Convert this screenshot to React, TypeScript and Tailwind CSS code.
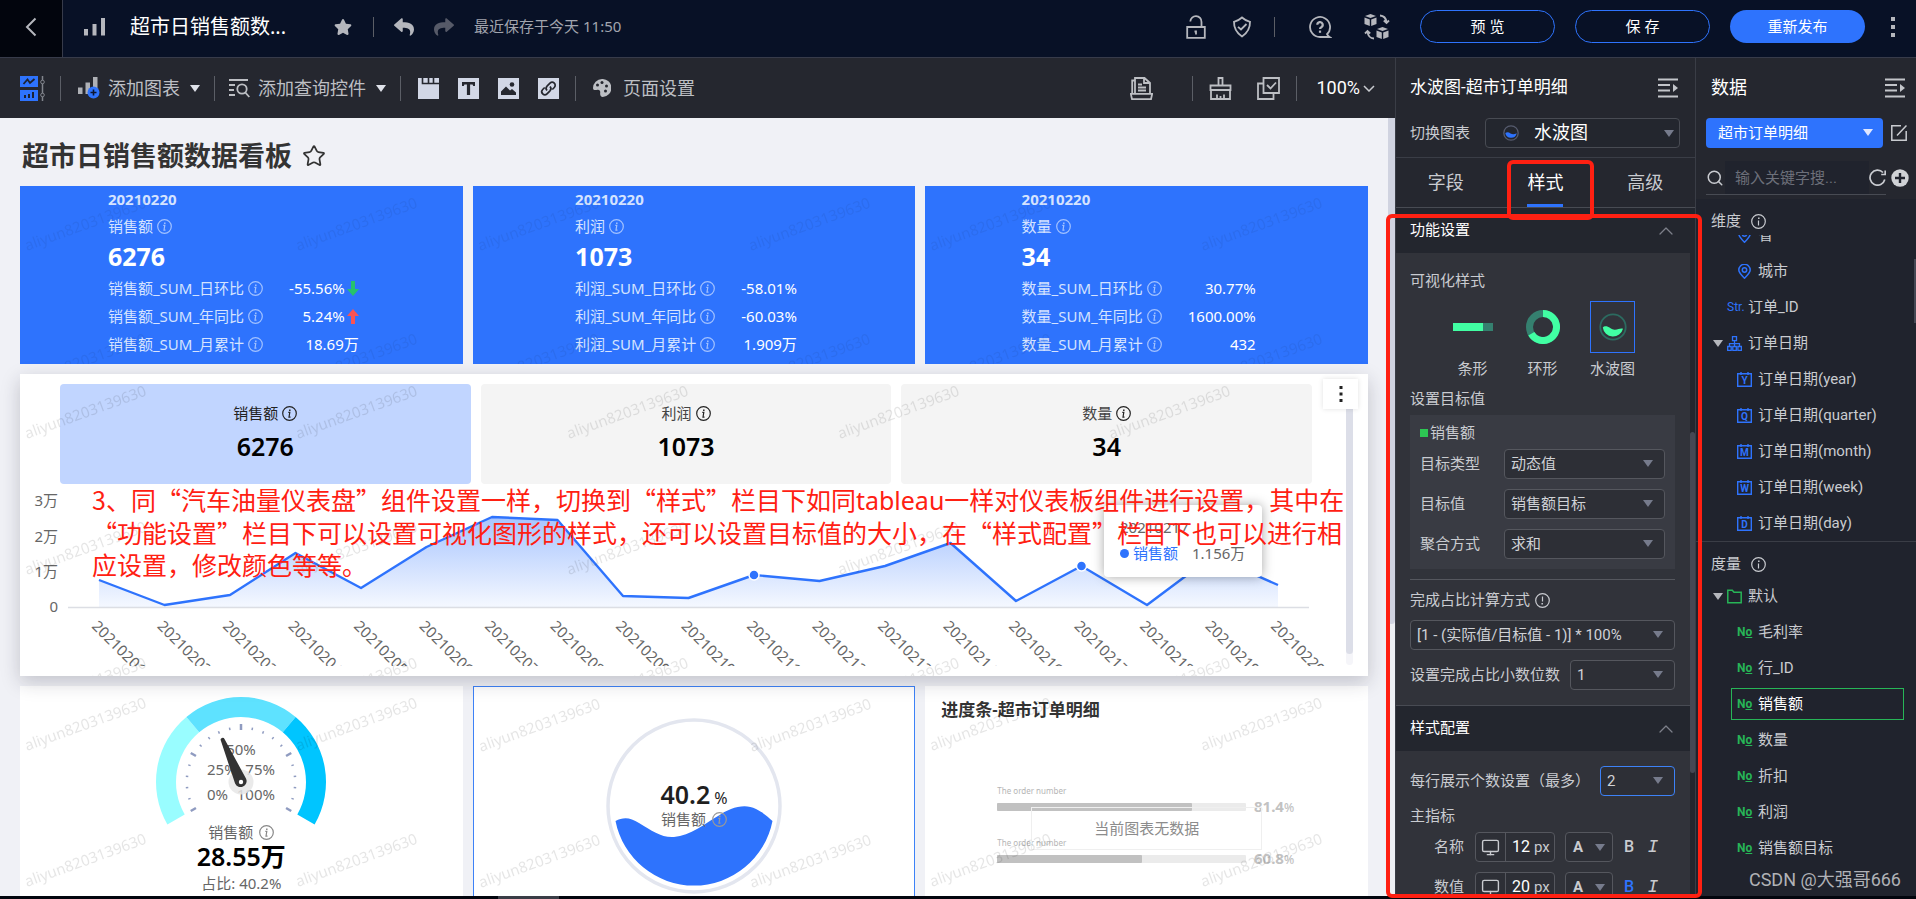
import { useId, type ReactNode } from "react";
import { Search, ChevronUp, Star, Monitor } from "lucide-react";
import { FaStar, FaReply, FaShare } from "react-icons/fa";
import { clsx } from "clsx";

interface Kpi {
  name: string;
  total: string;
  rows: { label: string; value: string; trend?: "up" | "down" }[];
}

const KPIS: Kpi[] = [
  {
    name: "销售额",
    total: "6276",
    rows: [
      { label: "销售额_SUM_日环比", value: "-55.56%", trend: "down" },
      { label: "销售额_SUM_年同比", value: "5.24%", trend: "up" },
      { label: "销售额_SUM_月累计", value: "18.69万" },
    ],
  },
  {
    name: "利润",
    total: "1073",
    rows: [
      { label: "利润_SUM_日环比", value: "-58.01%" },
      { label: "利润_SUM_年同比", value: "-60.03%" },
      { label: "利润_SUM_月累计", value: "1.909万" },
    ],
  },
  {
    name: "数量",
    total: "34",
    rows: [
      { label: "数量_SUM_日环比", value: "30.77%" },
      { label: "数量_SUM_年同比", value: "1600.00%" },
      { label: "数量_SUM_月累计", value: "432" },
    ],
  },
];

const SALES = [96, 121, 111, 69, 104, 63, 33, 36, 112, 114, 91, 97, 82, 59, 117, 82, 121, 72, 101];
const DAYS = ["01", "02", "03", "04", "05", "06", "07", "08", "09", "10", "11", "12", "13", "14", "16", "17", "18", "19", "20"];
const Y_TICKS = [
  { label: "3万", y: 17 },
  { label: "2万", y: 53 },
  { label: "1万", y: 88 },
  { label: "0", y: 123 },
];

interface Field {
  kind: "pin" | "str" | "tree" | "folder" | "number" | "date";
  label: string;
  letter?: string;
  active?: boolean;
}

const DIMENSIONS: Field[] = [
  { kind: "pin", label: "省" },
  { kind: "pin", label: "城市" },
  { kind: "str", label: "订单_ID" },
  { kind: "tree", label: "订单日期" },
  { kind: "date", letter: "Y", label: "订单日期(year)" },
  { kind: "date", letter: "Q", label: "订单日期(quarter)" },
  { kind: "date", letter: "M", label: "订单日期(month)" },
  { kind: "date", letter: "W", label: "订单日期(week)" },
  { kind: "date", letter: "D", label: "订单日期(day)" },
];

const MEASURES: Field[] = [
  { kind: "folder", label: "默认" },
  { kind: "number", label: "毛利率" },
  { kind: "number", label: "行_ID" },
  { kind: "number", label: "销售额", active: true },
  { kind: "number", label: "数量" },
  { kind: "number", label: "折扣" },
  { kind: "number", label: "利润" },
  { kind: "number", label: "销售额目标" },
];

function Watermark({ faint }: { faint?: boolean }) {
  const id = useId();
  return (
    <svg className="pointer-events-none absolute inset-0 h-full w-full" aria-hidden="true">
      <defs>
        <pattern id={id} width="271" height="136" patternUnits="userSpaceOnUse">
          <text x="7" y="65" transform="rotate(-20 7 65)" fontSize="15" fill="#000" fillOpacity={faint ? 0.06 : 0.1}>
            aliyun8203139630
          </text>
        </pattern>
      </defs>
      <rect width="100%" height="100%" fill={`url(#${id})`} />
    </svg>
  );
}

// circled "i" with a serif foot; `plain` drops the serifs
function InfoIcon({ className, plain }: { className?: string; plain?: boolean }) {
  return (
    <svg viewBox="0 0 15 15" className={clsx("h-[15px] w-[15px] shrink-0", className)} fill="none" stroke="currentColor" strokeWidth="1.200" aria-hidden="true">
      <circle cx="7.500" cy="7.500" r="6.800" />
      <path d={plain ? "M7.500 6.500v5" : "M6.300 6.400h1.500L7 11.200h1.500"} />
      <path d="M7.800 3.500v1.600" strokeWidth="1.500" />
    </svg>
  );
}

function Caret({ className }: { className?: string }) {
  return (
    <svg viewBox="0 0 10 7" className={clsx("h-[7px] w-[10px] shrink-0 fill-current", className)} aria-hidden="true">
      <path d="M0 0h10L5 7z" />
    </svg>
  );
}

function Divider({ className }: { className?: string }) {
  return <span className={clsx("w-px shrink-0 bg-[#5b5e66]", className)} />;
}

function CollapseIcon() {
  return (
    <svg viewBox="0 0 20 20" className="h-5 w-5" fill="none" stroke="#c3c5ca" strokeWidth="2">
      <path d="M0 1.500h20M0 7h12M0 12.500h12M0 18.500h20" />
      <path d="M15 6l5 4-5 4z" fill="#c3c5ca" stroke="none" />
    </svg>
  );
}

function TopBar() {
  return (
    <header className="flex h-[58px] shrink-0 border-b border-[#373b4a] bg-[#081126] text-[#b5b7bd]">
      <button aria-label="返回" className="grid h-full w-[63px] shrink-0 place-items-center border-r border-[#373b4a] bg-[#02050d] pb-1">
        <svg viewBox="0 0 12 20" className="h-5 w-3" fill="none" stroke="currentColor" strokeWidth="2">
          <path d="M10.500 1.500L2 10l8.500 8.500" />
        </svg>
      </button>
      <div className="flex flex-1 items-center pb-1">
        <svg viewBox="0 0 22 18" className="ml-[21px] h-[18px] w-[22px] shrink-0 fill-current">
          <path d="M0 11h4v6.500H0zM8.500 6h4v11.500h-4zM17 0h4v17.500h-4z" />
        </svg>
        <h1 className="ml-6 text-xl text-white">超市日销售额数...</h1>
        <button aria-label="收藏" className="ml-12"><FaStar className="h-[18px] w-[18px]" /></button>
        <Divider className="ml-[21px] h-5" />
        <button aria-label="撤销" className="ml-5"><FaReply className="h-5 w-5" /></button>
        <button aria-label="重做" className="ml-5 text-[#565a68]"><FaShare className="h-5 w-5" /></button>
        <span className="ml-5 text-[15px] text-[#a2a5ae]">最近保存于今天 11:50</span>

        <div className="ml-auto flex items-center pr-[19px]">
          <button aria-label="解锁">
            <svg viewBox="0 0 20 24" className="h-6 w-5" fill="none" stroke="currentColor" strokeWidth="1.800">
              <path d="M1.200 12h17.600v10.800H1.200zM15.500 12V7a5.500 5.500 0 0 0-11.200-.5M10 15.500v4M8.500 16.500H10" />
            </svg>
          </button>
          <button aria-label="权限" className="ml-[26px]">
            <svg viewBox="0 0 20 22" className="h-[22px] w-5" fill="none" stroke="currentColor" strokeWidth="1.800">
              <path d="M10 1.500c2.200 2 4.800 3.500 8 4.300.2 6.500-2.800 11.200-8 14.700C4.800 17 1.800 12.300 2 5.800 5.200 5 7.800 3.500 10 1.500z" />
              <path d="M6 10.800l3 2.700 5.500-5.500" />
            </svg>
          </button>
          <Divider className="ml-[22px] h-5" />
          <button aria-label="帮助" className="ml-[33px]">
            <svg viewBox="0 0 24 24" className="h-6 w-6" fill="none" stroke="currentColor" strokeWidth="1.800">
              <path d="M19 19.200a10 10 0 1 0-7 2.800h9.500c-1.300-.8-2-1.700-2.500-2.800z" />
              <path d="M9.300 9.800a2.700 2.700 0 1 1 4 2.400c-.9.500-1.300.9-1.300 1.900" strokeWidth="2.200" />
              <path d="M12 15.600v2.200" strokeWidth="2.200" />
            </svg>
          </button>
          <button aria-label="资源切换" className="ml-8">
            <svg viewBox="0 0 26 26" className="h-[26px] w-[26px]" fill="currentColor">
              <path d="M6.500 0l5.500 2-5.500 2L1 2zM.5 3.500l5.300 2V12L.5 10zM12.500 3.500l-5.300 2V12l5.300-2z" />
              <path d="M18.500 13l5.500 2-5.500 2-5.500-2zM12.500 16.500l5.300 2V25l-5.300-2zM24.500 16.500l-5.300 2V25l5.300-2z" />
              <path d="M16 1.500c3.500.3 6 2.800 6.500 6.500M19.800 6.500l2.700 2.500L25 6.500M10 24.500C6.500 24.300 4 21.800 3.500 18M1 19.500L3.500 17l2.700 2.500" fill="none" stroke="currentColor" strokeWidth="1.800" />
            </svg>
          </button>
          <button className="ml-[30px] h-[33px] w-[135px] rounded-full border border-[#2e73fd] text-[15px] text-white">预 览</button>
          <button className="ml-5 h-[33px] w-[135px] rounded-full border border-[#2e73fd] text-[15px] text-white">保 存</button>
          <button className="ml-5 h-[33px] w-[135px] rounded-full bg-[#2e73fd] text-[15px] text-white">重新发布</button>
          <button aria-label="更多" className="ml-6">
            <svg viewBox="0 0 8 20" className="h-5 w-2 fill-current">
              <path d="M2 0h4v4H2zM2 8h4v4H2zM2 16h4v4H2z" />
            </svg>
          </button>
        </div>
      </div>
    </header>
  );
}

function SquareIcon({ label, children }: { label: string; children: ReactNode }) {
  return (
    <button aria-label={label}>
      <svg viewBox="0 0 21 21" className="h-[21px] w-[21px]">
        <path d="M0 0h21v21H0z" fill="#d2d7e6" />
        {children}
      </svg>
    </button>
  );
}

function Toolbar() {
  return (
    <div className="flex h-[60px] shrink-0 items-center bg-[#25272f] pl-5 text-lg text-[#bdbfc4]">
      <button aria-label="布局">
        <svg viewBox="0 0 25 25" className="h-[25px] w-[25px]" fill="none">
          <path d="M0 0h18v11H0zM0 14h18v11H0z" fill="#2e73fd" />
          <path d="M3.500 8l4-4.500L10 7l4.500-4" stroke="#1d2230" strokeWidth="1.800" />
          <path d="M5 22v-3M9 22v-4M13 22v-6" stroke="#1d2230" strokeWidth="2" />
          <path d="M22.500 0v25" stroke="#82858d" strokeWidth="1.500" />
          <circle cx="22.500" cy="6" r="1.800" fill="#25272f" stroke="#82858d" />
          <circle cx="22.500" cy="19" r="1.800" fill="#25272f" stroke="#82858d" />
        </svg>
      </button>
      <Divider className="ml-[15px] h-[25px]" />
      <button className="ml-4 flex items-center">
        <svg viewBox="0 0 23 22" className="h-[22px] w-[23px]">
          <path d="M1 10.500h4.500V17H1zM8.500 5.500H13V17H8.500zM16 0h4.500v17H16z" fill="#aeb0b5" />
          <circle cx="16.500" cy="15.500" r="6" fill="#2e73fd" />
          <path d="M16.500 12.500v6M13.500 15.500h6" stroke="#0d1630" strokeWidth="1.600" />
        </svg>
        <span className="ml-2">添加图表</span>
        <Caret className="ml-2.5 h-[6px] w-2 text-[#dfe2ea]" />
      </button>
      <Divider className="ml-[14px] h-[25px]" />
      <button className="ml-[14px] flex items-center">
        <svg viewBox="0 0 21 20" className="h-5 w-[21px]" fill="none" stroke="currentColor" strokeWidth="1.800">
          <path d="M0 2h19M0 7h6M0 12h5M0 17h6" />
          <circle cx="13" cy="11" r="4.700" />
          <path d="M16.300 14.500l4 4.500" />
        </svg>
        <span className="ml-2">添加查询控件</span>
        <Caret className="ml-2.5 h-[6px] w-2 text-[#dfe2ea]" />
      </button>
      <Divider className="ml-[14px] h-[25px]" />
      <div className="ml-[17px] flex gap-[19px]">
        <SquareIcon label="标签页">
          <path d="M4.500 0v5.500h16.500M10.500 0v5.500M15.500 0v5.500" stroke="#25272f" strokeWidth="1.600" fill="none" />
        </SquareIcon>
        <SquareIcon label="文本">
          <path d="M4 4h13v4h-1.800l-.6-1.500h-2.500V17h-3.200V6.500H6.400L5.800 8H4z" fill="#25272f" />
        </SquareIcon>
        <SquareIcon label="图片">
          <path d="M3 17v-3.500l5-5 4 4 2-1.500 4 3.500V17z" fill="#25272f" />
          <circle cx="14" cy="6.500" r="2.300" fill="#25272f" />
        </SquareIcon>
        <SquareIcon label="链接">
          <path d="M9 12.500a3.200 3.200 0 0 1 0-4.300l3-3a3 3 0 0 1 4.300 4.300l-2 2M12 8.500a3.200 3.200 0 0 1 0 4.300l-3 3a3 3 0 0 1-4.300-4.300l2-2" stroke="#25272f" strokeWidth="1.700" fill="none" />
        </SquareIcon>
      </div>
      <Divider className="ml-4 h-[25px]" />
      <button className="ml-[17px] flex items-center gap-3">
        <svg viewBox="0 0 18 18" className="h-[18px] w-[18px]">
          <path d="M9 0a9 9 0 0 0-9 9c0 2.500 2.500 2.200 4.500 1.800 2-.3 3 1 2.700 3-.3 2.300.5 4.200 2.600 4.200A9 9 0 0 0 9 0z" fill="#bdbfc4" />
          <circle cx="4.500" cy="6" r="1.500" fill="#25272f" />
          <circle cx="9" cy="3.600" r="1.500" fill="#25272f" />
          <circle cx="13.500" cy="7" r="1.500" fill="#25272f" />
          <circle cx="12.500" cy="12" r="1.500" fill="#25272f" />
        </svg>
        页面设置
      </button>

      <div className="ml-auto flex items-center pr-5">
        <button aria-label="打印">
          <svg viewBox="0 0 23 23" className="h-[23px] w-[23px]" fill="none" stroke="currentColor" strokeWidth="1.800">
            <path d="M5 16V1h9.500L20 6v10M2.200 16.500V3.500H5M14 1v5h6M.8 16.800h21.400L21 22.200H2zM8 7.500h4M8 10.500h8M8 13.500h8" />
          </svg>
        </button>
        <Divider className="ml-[39px] h-[25px]" />
        <button aria-label="格式刷" className="ml-4">
          <svg viewBox="0 0 23 23" className="h-[23px] w-[23px]" fill="none" stroke="currentColor" strokeWidth="1.800">
            <path d="M9.500 8.500V1h4v7.500M1.500 8.500h20v4.500h-20zM2 13v9h19v-9M8 22v-4.500M11.500 22v-3M15 22v-4.500" />
          </svg>
        </button>
        <button aria-label="批量选择" className="ml-[25px]">
          <svg viewBox="0 0 23 23" className="h-[23px] w-[23px]" fill="none" stroke="currentColor" strokeWidth="1.800">
            <path d="M6.500 1H22v15H6.500zM6.500 6.500H1V22h15.500v-6M10 8l3.500 3.500 5.500-6" />
          </svg>
        </button>
        <Divider className="ml-4 h-[25px]" />
        <button className="ml-[19px] flex items-center gap-[3px] font-['Roboto',sans-serif] text-white">
          100%
          <svg viewBox="0 0 12 7" className="h-[7px] w-3" fill="none" stroke="#c9cbd0" strokeWidth="1.500">
            <path d="M1 1l5 5 5-5" />
          </svg>
        </button>
      </div>
    </div>
  );
}

function TrendArrow({ trend }: { trend: "up" | "down" }) {
  return (
    <svg viewBox="0 0 12 15" className={clsx("ml-0.5 h-[15px] w-3", trend === "up" ? "rotate-180 fill-[#f95353]" : "fill-[#27c26c]")}>
      <path d="M4 0h4v8h4l-6 7-6-7h4z" />
    </svg>
  );
}

function KpiCard({ kpi }: { kpi: Kpi }) {
  return (
    <section className="relative flex h-[178px] justify-center bg-[#2e73fd] pr-4 text-[15px] text-[#d5e3ff]">
      <div>
        <p className="h-[26px] leading-[26px] font-bold">20210220</p>
        <p className="flex h-7 items-center gap-1">
          {kpi.name}
          <InfoIcon className="text-[#a3c2ff]" />
        </p>
        <p className="h-[34px] text-[25px] leading-8 font-bold text-white">{kpi.total}</p>
        <table>
          <tbody>
            {kpi.rows.map((row) => (
              <tr key={row.label} className="h-7">
                <th className="p-0 font-normal">
                  <span className="flex items-center gap-1">
                    {row.label}
                    <InfoIcon className="text-[#a3c2ff]" />
                  </span>
                </th>
                <td className="p-0 pl-[26px] text-white">
                  <span className="flex items-center justify-end">
                    {row.value}
                    {row.trend && <TrendArrow trend={row.trend} />}
                  </span>
                </td>
              </tr>
            ))}
          </tbody>
        </table>
      </div>
      <Watermark faint />
    </section>
  );
}

function TrendChart() {
  const pts = SALES.map((y, i) => [79 + i * 65.5, y]);
  const line = pts.map((p) => p.join(",")).join(" L");
  return (
    <svg viewBox="0 0 1348 192" className="block h-auto w-full" fontSize="15" fill="#666">
      <defs>
        <linearGradient id="area" x1="0" y1="0" x2="0" y2="1">
          <stop offset="0" stopColor="#2e73fd" stopOpacity="0.42" />
          <stop offset="1" stopColor="#2e73fd" stopOpacity="0.05" />
        </linearGradient>
        <clipPath id="labels">
          <path d="M0 124h1348v58H0z" />
        </clipPath>
      </defs>
      {Y_TICKS.map((t) => (
        <text key={t.label} x="38" y={t.y + 5} textAnchor="end">{t.label}</text>
      ))}
      <path d="M48 123.500h1241" stroke="#dcdee4" strokeWidth="1.500" />
      <path d={`M${line} L1258,123 L79,123 Z`} fill="url(#area)" />
      <path d={`M${line}`} fill="none" stroke="#2e73fd" strokeWidth="2.400" strokeLinejoin="round" />
      {[10, 15].map((i) => (
        <circle key={i} cx={pts[i][0]} cy={pts[i][1]} r="5" fill="#2e73fd" stroke="#fff" strokeWidth="1.500" />
      ))}
      <g clipPath="url(#labels)">
        {DAYS.map((d, i) => (
          <text key={d} transform={`translate(${71 + i * 65.5} 143) rotate(45)`}>{`202102${d}`}</text>
        ))}
      </g>
    </svg>
  );
}

function TrendCard() {
  return (
    <section className="relative z-10 bg-white pt-2.5 shadow-[0_6px_18px_rgba(30,30,50,0.22)]">
      <div className="mr-14 ml-10 grid grid-cols-3 gap-2.5">
        {KPIS.map((kpi, i) => (
          <button
            key={kpi.name}
            className={clsx("flex h-[100px] flex-col items-center rounded-sm pt-4 text-[15px]", i === 0 ? "bg-[#c1d5ff] text-[#222]" : "bg-[#f4f4f4] text-[#444]")}
          >
            <span className="flex h-[26px] items-center gap-1">
              {kpi.name}
              <InfoIcon className="text-[#222]" />
            </span>
            <span className="mt-1 text-[25px] leading-8 font-semibold text-black">{kpi.total}</span>
          </button>
        ))}
      </div>
      <TrendChart />
      <Watermark />
      <div className="absolute top-3 right-[15px] bottom-[11px] w-[7px] rounded bg-[#f5f5f9]">
        <div className="h-[96%] rounded bg-[#dcdee8]" />
      </div>
      <button aria-label="图表菜单" className="absolute top-[5px] right-2.5 grid h-[30px] w-[35px] place-items-center bg-white shadow-[0_0_5px_rgba(0,0,0,0.12)]">
        <svg viewBox="0 0 4 16" className="h-4 w-1 fill-[#222]">
          <path d="M.5 0h3v3h-3zM.5 6.500h3v3h-3zM.5 13h3v3h-3z" />
        </svg>
      </button>
      <div className="absolute right-[106px] bottom-[99px] w-[158px] rounded-sm bg-white px-4 py-2.5 text-[15px] leading-7 text-[#666] shadow-[0_0_12px_rgba(0,0,0,0.35)]">
        <p className="leading-6">20210217</p>
        <p className="flex items-center">
          <span className="mr-1 h-[9px] w-[9px] rounded-full bg-[#2e73fd]" />
          <span className="text-[#2e73fd]">销售额</span>
          <span className="ml-3.5">1.156万</span>
        </p>
      </div>
      <p className="pointer-events-none absolute top-[109px] left-[72px] text-[25px] leading-8 whitespace-nowrap text-[#ff2012] font-['Noto_Sans_CJK_SC',sans-serif]">
        3、同“汽车油量仪表盘”组件设置一样，切换到“样式”栏目下如同<span className="font-['Noto_Sans',sans-serif]">tableau</span>一样对仪表板组件进行设置，其中在
        <br />
        “功能设置”栏目下可以设置可视化图形的样式，还可以设置目标值的大小，在“样式配置”栏目下也可以进行相
        <br />
        应设置，修改颜色等等。
      </p>
    </section>
  );
}

// point on a circle centred at (88, 88), angle in degrees counter-clockwise
const polar = (r: number, deg: number) => {
  const a = (deg * Math.PI) / 180;
  return `${88 + r * Math.cos(a)} ${88 - r * Math.sin(a)}`;
};

const ringSegment = (from: number, to: number) =>
  `M${polar(85, from)}A85 85 0 0 1 ${polar(85, to)}L${polar(65, to)}A65 65 0 0 0 ${polar(65, from)}Z`;

function GaugeCard() {
  return (
    <section className="relative flex flex-col items-center bg-white pt-2 text-[15px] text-[#666]">
      <svg viewBox="0 0 176 126" className="h-[126px] w-44 overflow-visible" fontSize="15" fill="#666">
        <path d={ringSegment(210, 130)} fill="#99fdff" />
        <path d={ringSegment(130, 50)} fill="#5ee2ff" />
        <path d={ringSegment(50, -30)} fill="#00c5ff" />
        {Array.from({ length: 21 }, (_, i) => {
          const deg = 210 - i * 12;
          const major = i % 5 === 0;
          return (
            <path
              key={i}
              d={`M${polar(major ? 58 : 55.5, deg)}L${polar(major ? 52 : 53, deg)}`}
              stroke="#8f9bc0"
              strokeWidth={major ? 2.5 : 1.5}
            />
          );
        })}
        <text x="88" y="61" textAnchor="middle">50%</text>
        <text x="54" y="81">25%</text>
        <text x="122" y="81" textAnchor="end">75%</text>
        <text x="54" y="106">0%</text>
        <text x="122" y="106" textAnchor="end">100%</text>
        <circle cx="88" cy="88" r="12.500" fill="#e6e6e6" fillOpacity="0.85" />
        <g transform="rotate(-23.500 88 88)">
          <path d="M86 42a2 2 0 0 1 4 0l4 45a6 6 0 1 1-12 0z" fill="#333" />
        </g>
        <circle cx="88" cy="88" r="2.200" fill="#fff" />
      </svg>
      <p className="flex h-6 items-center gap-1.5">
        销售额
        <InfoIcon className="text-[#888]" />
      </p>
      <p className="h-[25px] text-[25px] leading-[25px] font-semibold text-black">28.55万</p>
      <p className="h-7 leading-7">占比: 40.2%</p>
      <Watermark />
    </section>
  );
}

function LiquidCard() {
  return (
    <section className="relative flex justify-center border border-[#3d82f7] bg-white pt-[31px]">
      <div className="relative h-[176px] w-[176px]">
        <svg viewBox="0 0 176 176" className="h-full w-full">
          <circle cx="88" cy="88" r="86" fill="none" stroke="#e3e6ef" strokeWidth="3.500" />
          <path d="M9.500 103C17 99 24 99 33 105C46 113 56 120 68 119C84 118 100 105 112 98C124 90 138 85 150 91C158 95 162 99 166.500 103A80 80 0 0 1 9.500 103Z" fill="#2e73fd" />
        </svg>
        <div className="absolute inset-0 flex flex-col items-center justify-center text-[15px] text-[#666]">
          <p className="flex h-[26px] items-baseline gap-1 leading-[26px] text-[#1f1f1f]">
            <span className="text-[25px] font-semibold">40.2</span>
            <span className="text-base">%</span>
          </p>
          <p className="flex h-6 items-center gap-1.5">
            销售额
            <InfoIcon className="text-[#999]" />
          </p>
        </div>
      </div>
      <Watermark />
    </section>
  );
}

function GhostBar({ value }: { value: number }) {
  return (
    <div className="text-[#c2c2c2]">
      <p className="text-[8px] leading-4 text-[#b5b5b5]">The order number</p>
      <div className="flex h-4 items-center">
        <div className="h-2 flex-1 rounded-[1px] bg-[#ebebeb]">
          <div className="h-2 rounded-[1px] bg-[#c1c1c1]" style={{ width: `${value * 0.96}%` }} />
        </div>
        <span className="ml-2 w-[42px] text-[15px] leading-4 font-bold">
          {value}
          <span className="text-xs font-medium">%</span>
        </span>
      </div>
    </div>
  );
}

function ProgressCard() {
  return (
    <section className="relative bg-white pt-3">
      <h3 className="px-4 text-[17px] leading-6 font-semibold text-[#333]">进度条-超市订单明细</h3>
      <div className="relative mx-18 mt-[61px] space-y-5">
        <GhostBar value={81.4} />
        <GhostBar value={60.8} />
        <p className="absolute inset-x-[34px] top-6 border border-[#efefef] text-center text-[15px] leading-[41px] text-[#8c8c8c]">
          当前图表无数据
        </p>
      </div>
      <Watermark />
    </section>
  );
}

function Canvas() {
  return (
    <main className="flex min-h-0 flex-1 bg-[#f0f1f6]">
      <div className="flex min-w-0 flex-1 flex-col overflow-hidden px-5">
        <div className="flex h-[68px] shrink-0 items-center gap-2.5 pt-2 pl-0.5">
          <h2 className="text-[27px] font-bold text-[#333]">超市日销售额数据看板</h2>
          <button aria-label="收藏看板"><Star className="h-6 w-6 text-[#333]" strokeWidth={1.75} /></button>
        </div>
        <div className="grid shrink-0 grid-cols-3 gap-2.5">
          {KPIS.map((kpi) => (
            <KpiCard key={kpi.name} kpi={kpi} />
          ))}
        </div>
        <div className="mt-2.5 shrink-0"><TrendCard /></div>
        <div className="mt-2.5 grid h-[300px] shrink-0 grid-cols-3 gap-2.5">
          <GaugeCard />
          <LiquidCard />
          <ProgressCard />
        </div>
      </div>
      <div className="w-[7px] shrink-0 bg-[#eef0f4]">
        <div className="h-[65%] rounded-b bg-[#d0d3e0]" />
      </div>
    </main>
  );
}

function SelectBox({ id, value, className }: { id: string; value: string; className?: string }) {
  return (
    <div className={clsx("relative h-[30px]", className)}>
      <select
        id={id}
        className="h-full w-full appearance-none rounded-sm border border-[#55575e] bg-[#2d2f36] pl-1.5 text-[15px] text-[#d0d2d6] outline-none"
      >
        <option>{value}</option>
      </select>
      <Caret className="pointer-events-none absolute top-[11px] right-3 text-[#767b8c]" />
    </div>
  );
}

function SectionHeader({ title }: { title: string }) {
  return (
    <button className="flex h-[45px] w-full items-center justify-between bg-[#23262e] pr-3 pl-3.5 text-white">
      {title}
      <ChevronUp className="h-6 w-6 text-[#7d808a]" strokeWidth={1.25} />
    </button>
  );
}

const TARGETS = [
  { id: "target-type", label: "目标类型", value: "动态值" },
  { id: "target-value", label: "目标值", value: "销售额目标" },
  { id: "target-agg", label: "聚合方式", value: "求和" },
];

const VISUAL_STYLES = [
  {
    label: "条形",
    icon: (
      <svg viewBox="0 0 40 8" className="h-2 w-10">
        <path d="M0 0h40v8H0z" fill="#35806f" />
        <path d="M0 0h30v8H0z" fill="#41ffa3" />
      </svg>
    ),
  },
  {
    label: "环形",
    icon: (
      <svg viewBox="0 0 34 34" className="h-[34px] w-[34px]" fill="none" strokeWidth="7">
        <circle cx="17" cy="17" r="13.500" stroke="#35806f" />
        <path d="M17 3.500A13.500 13.500 0 1 1 5.300 23.700" stroke="#41ffa3" />
      </svg>
    ),
  },
  {
    label: "水波图",
    icon: (
      <svg viewBox="0 0 28 28" className="h-7 w-7">
        <circle cx="14" cy="14" r="12.700" fill="none" stroke="#2c6b60" strokeWidth="1.800" />
        <path d="M3.800 14.500c.8-1 3-1.600 5-.8 2.500 1 3.700 2.800 6.700 3 3.500.2 5.500-1.800 8.500-1A10.300 10.300 0 0 1 3.800 14.500z" fill="#41ffa3" />
      </svg>
    ),
  },
];

function FontRow({ id, label, size, bold }: { id: string; label: string; size: number; bold?: boolean }) {
  return (
    <div className="flex h-[30px] items-center pl-6">
      <label htmlFor={id} className="w-[41px]">{label}</label>
      <div className="flex h-full w-20 items-center rounded-sm border border-[#55575e] bg-[#2d2f36]">
        <span className="grid h-full w-[30px] place-items-center border-r border-[#55575e]">
          <Monitor className="h-[19px] w-[19px]" strokeWidth={1.75} />
        </span>
        <input id={id} defaultValue={size} className="w-7 pl-1.5 text-base text-white outline-none" />
        px
      </div>
      <button aria-label={`${label}颜色`} className="ml-2.5 flex h-full w-12 items-center justify-center gap-3 rounded-sm border border-[#55575e] bg-[#2d2f36] font-bold">
        A
        <Caret className="text-[#767b8c]" />
      </button>
      <button className={clsx("ml-2.5 w-3 text-base font-medium", bold && "text-[#2e73fd]")}>B</button>
      <button className="ml-3 w-3 font-['Liberation_Mono',monospace] text-lg italic">I</button>
    </div>
  );
}

function StylePanel() {
  return (
    <aside className="relative z-20 flex w-75 shrink-0 flex-col border-l border-[#3a3d46] bg-[#25272f] text-[15px] text-[#c9cbd0]">
      <div className="flex h-[60px] shrink-0 items-center justify-between pr-[17px] pl-3.5 text-[17px] text-white">
        水波图-超市订单明细
        <button aria-label="收起样式面板"><CollapseIcon /></button>
      </div>
      <div className="flex h-10 shrink-0 items-start border-b border-[#3a3d46] pr-[15px] pl-3.5">
        <label htmlFor="chart-kind" className="w-[75px] leading-[30px]">切换图表</label>
        <div className="relative h-[30px] flex-1">
          <select id="chart-kind" className="h-full w-full appearance-none rounded-sm border border-[#484b53] bg-[#23262e] pl-12 text-lg text-white outline-none">
            <option>水波图</option>
          </select>
          <svg viewBox="0 0 16 16" className="pointer-events-none absolute top-[7px] left-[18px] h-4 w-4">
            <circle cx="8" cy="8" r="7.200" fill="none" stroke="#565b6e" strokeWidth="1.300" />
            <path d="M2.300 8c2-1.300 3.600-.6 5.200.4 2 1.200 4 1 6.200-.2A5.800 5.800 0 0 1 2.300 8z" fill="#2e73fd" />
          </svg>
          <Caret className="pointer-events-none absolute top-3 right-1.5 text-[#767b8c]" />
        </div>
      </div>
      <div role="tablist" className="flex h-[50px] shrink-0 justify-around border-b border-[#484b53] text-lg">
        <button role="tab" className="border-b-3 border-transparent pt-1">字段</button>
        <button role="tab" aria-selected="true" className="border-b-3 border-[#2e73fd] pt-1 text-white">样式</button>
        <button role="tab" className="border-b-3 border-transparent pt-1">高级</button>
      </div>

      <div className="flex min-h-0 flex-1 overflow-hidden">
        <div className="min-w-0 flex-1">
          <SectionHeader title="功能设置" />
          <div className="border-b border-[#484b53] bg-[#31333a] pt-4 pr-[15px] pb-[15px] pl-3.5">
            <p className="leading-6">可视化样式</p>
            <div className="mt-2 ml-10 flex gap-[25px]">
              {VISUAL_STYLES.map((s) => (
                <button key={s.label} className="w-[45px]">
                  <span className={clsx("grid h-[52px] place-items-center border", s.label === "水波图" ? "border-[#2e73fd]" : "border-transparent")}>
                    {s.icon}
                  </span>
                  <span className="mt-1 block leading-6">{s.label}</span>
                </button>
              ))}
            </div>
            <p className="mt-1.5 leading-6">设置目标值</p>
            <div className="mt-1 bg-[#393b43] px-2.5 pt-1.5 pb-2.5">
              <p className="mb-1 flex items-center gap-0.5 leading-6">
                <span className="h-2 w-2 bg-[#2dc653]" />
                销售额
              </p>
              <div className="space-y-2.5">
                {TARGETS.map((t) => (
                  <div key={t.id} className="flex items-center">
                    <label htmlFor={t.id} className="w-[84px]">{t.label}</label>
                    <SelectBox id={t.id} value={t.value} className="flex-1" />
                  </div>
                ))}
              </div>
            </div>
            <div className="mt-2.5 border-t border-[#55575e] pt-2">
              <label htmlFor="ratio" className="flex items-center gap-[5px] leading-6">
                完成占比计算方式
                <InfoIcon plain className="rotate-180" />
              </label>
              <SelectBox id="ratio" value="[1 - (实际值/目标值 - 1)] * 100%" className="mt-2" />
            </div>
            <div className="mt-2.5 flex items-center justify-between">
              <label htmlFor="digits">设置完成占比小数位数</label>
              <SelectBox id="digits" value="1" className="w-[105px]" />
            </div>
          </div>
          <SectionHeader title="样式配置" />
          <div className="bg-[#31333a] pt-[15px] pr-[15px] pb-4 pl-3.5">
            <div className="flex items-center justify-between">
              <label htmlFor="per-row">每行展示个数设置（最多）</label>
              <SelectBox id="per-row" value="2" className="w-[75px] [&>select]:border-[#3d82f7]" />
            </div>
            <p className="mt-2 leading-6">主指标</p>
            <div className="mt-1 space-y-2.5">
              <FontRow id="name-size" label="名称" size={12} />
              <FontRow id="value-size" label="数值" size={20} bold />
            </div>
          </div>
        </div>
        <div className="flex w-[5px] shrink-0 flex-col bg-[#23262e]">
          <div className="flex-[224]" />
          <div className="flex-[341] rounded-full bg-[#454854]" />
          <div className="flex-[123]" />
        </div>
      </div>

      {/* callout frames */}
      <div className="pointer-events-none absolute top-[102px] left-[111px] h-[60px] w-[87px] rounded-md border-4 border-[#ff2012]" />
      <div className="pointer-events-none absolute top-[156px] -right-[7px] -bottom-0.5 -left-2.5 rounded-md border-4 border-[#ff2012]" />
    </aside>
  );
}

function FieldIcon({ field }: { field: Field }) {
  switch (field.kind) {
    case "pin":
      return (
        <svg viewBox="0 0 15 15" className="h-[15px] w-[15px]" fill="none" stroke="#2e73fd" strokeWidth="1.500">
          <path d="M7.500 14.200C4 10.800 1.800 8.600 1.800 6a5.700 5.700 0 0 1 11.400 0c0 2.600-2.200 4.800-5.700 8.200z" />
          <circle cx="7.500" cy="6" r="2.200" />
        </svg>
      );
    case "str":
      return <span className="w-[15px] text-xs text-[#2e73fd]">Str.</span>;
    case "tree":
      return (
        <svg viewBox="0 0 15 15" className="h-[15px] w-[15px]" fill="none" stroke="#2e73fd" strokeWidth="1.300">
          <path d="M5.500.7h4v4h-4zM.7 10.500h3.500v3.800H.7zM5.800 10.500h3.500v3.800H5.800zM10.900 10.500h3.500v3.800h-3.500zM7.500 4.700v5.800M2.500 10.500V7.700h10v2.800" />
        </svg>
      );
    case "folder":
      return (
        <svg viewBox="0 0 15 15" className="h-[15px] w-[15px]" fill="none" stroke="#27b557" strokeWidth="1.500">
          <path d="M.8 1.300h4.500l1.700 2h7.200v10.400H.8z" />
        </svg>
      );
    case "number":
      return <span className="w-[15px] text-xs font-bold text-[#27b557]">N<span className="underline">o</span></span>;
    case "date":
      return (
        <svg viewBox="0 0 15 15" className="h-[15px] w-[15px]">
          <path d="M.7 1.700h13.600v12.600H.7zM4 0v3M11 0v3" fill="none" stroke="#2e73fd" strokeWidth="1.400" />
          <text x="7.500" y="12" textAnchor="middle" fontSize="10" fontWeight="700" fill="#2e73fd">{field.letter}</text>
        </svg>
      );
  }
}

function FieldList({ fields }: { fields: Field[] }) {
  return (
    <ul>
      {fields.map((f) => {
        const parent = f.kind === "tree" || f.kind === "folder";
        const top = parent || f.kind === "str";
        return (
          <li key={f.label} className="flex h-9 items-center pr-3">
            {parent && <Caret className="ml-[17px] h-1.5 w-2.5 text-[#b5b7bd]" />}
            <button
              className={clsx(
                "flex h-8 flex-1 items-center gap-1.5 border text-left whitespace-nowrap",
                parent ? "pl-[3px]" : top ? "ml-[30px]" : "ml-[35px] pl-[5px]",
                f.active ? "border-[#27b557] text-white" : "border-transparent",
              )}
            >
              <FieldIcon field={f} />
              {f.label}
            </button>
          </li>
        );
      })}
    </ul>
  );
}

function DataPanel() {
  return (
    <aside className="relative flex w-[221px] shrink-0 flex-col border-l border-[#3a3d46] bg-[#20232d] text-[15px] text-[#c9cbd0]">
      <div className="shrink-0 bg-[#25272f]">
        <div className="flex h-[60px] items-center justify-between pr-[11px] pl-[15px] text-lg text-white">
          数据
          <button aria-label="收起数据面板"><CollapseIcon /></button>
        </div>
        <div className="flex items-center gap-2 pr-[9px] pl-2.5">
          <div className="relative h-[30px] flex-1">
            <select aria-label="数据集" className="h-full w-full appearance-none rounded-sm bg-[#2e73fd] pl-3 text-white outline-none">
              <option>超市订单明细</option>
            </select>
            <Caret className="pointer-events-none absolute top-[11px] right-2.5 text-[#dfe6ff]" />
          </div>
          <button aria-label="编辑数据集">
            <svg viewBox="0 0 16 16" className="h-4 w-4" fill="none" stroke="currentColor" strokeWidth="1.500">
              <path d="M10 .8H.8v14.400h14.400V6M6 10.500L15.500.5" />
            </svg>
          </button>
        </div>
        <div className="mt-[13px] flex h-[38px] items-start pr-[7px] pl-2.5">
          <div className="flex h-[34px] min-w-0 flex-1 items-center border-b border-[#484b53]">
            <Search className="h-[18px] w-[18px] shrink-0" />
            <input aria-label="搜索字段" placeholder="输入关键字搜..." className="ml-px h-full w-[145px] min-w-0 bg-[#20232d] pl-2.5 outline-none placeholder:text-[#6d707a]" />
            <svg viewBox="0 0 17 17" className="h-[17px] w-[17px] shrink-0" fill="none" stroke="currentColor" strokeWidth="1.700">
              <path d="M15.800 10.500A7.500 7.500 0 1 1 14 3.500M16.200 1.500v4h-4" />
            </svg>
          </div>
          <button aria-label="新建字段" className="ml-[5px] self-start pt-2">
            <svg viewBox="0 0 18 18" className="h-[18px] w-[18px]">
              <circle cx="9" cy="9" r="8.700" fill="#d0d2d6" />
              <path d="M9 4v10M4 9h10" stroke="#20232d" strokeWidth="2.400" />
            </svg>
          </button>
        </div>
      </div>
      <h4 className="flex h-9 shrink-0 items-end gap-2.5 pb-0.5 pl-[15px] leading-6">
        维度
        <InfoIcon plain className="mb-1" />
      </h4>
      <div className="relative shrink-0 overflow-hidden border-b border-[#3a3d46]">
        <div className="-mt-[18px]"><FieldList fields={DIMENSIONS} /></div>
        <div className="absolute top-6 right-0 h-16 w-0.5 bg-[#454854]" />
      </div>
      <h4 className="flex h-9 shrink-0 items-end gap-2.5 pb-0.5 pl-[15px] leading-6">
        度量
        <InfoIcon plain className="mb-1" />
      </h4>
      <div className="min-h-0 flex-1 overflow-hidden">
        <FieldList fields={MEASURES} />
      </div>
      <p className="pointer-events-none absolute right-[15px] bottom-0.5 text-lg whitespace-nowrap text-[#b0b2b7]">CSDN @大强哥666</p>
    </aside>
  );
}

export default function App() {
  return (
    <div className="flex h-screen flex-col overflow-hidden bg-[#02050d] font-['Noto_Sans','Noto_Sans_CJK_SC',sans-serif]">
      <TopBar />
      <div className="flex min-h-0 flex-1">
        <div className="flex min-w-0 flex-1 flex-col">
          <Toolbar />
          <Canvas />
        </div>
        <div className="flex font-['Roboto','Noto_Sans_CJK_SC',sans-serif]">
          <StylePanel />
          <DataPanel />
        </div>
      </div>
      <div className="flex h-[3px] shrink-0">
        <div className="ml-[26%] w-[61px] bg-[#3a3d46]" />
      </div>
    </div>
  );
}
